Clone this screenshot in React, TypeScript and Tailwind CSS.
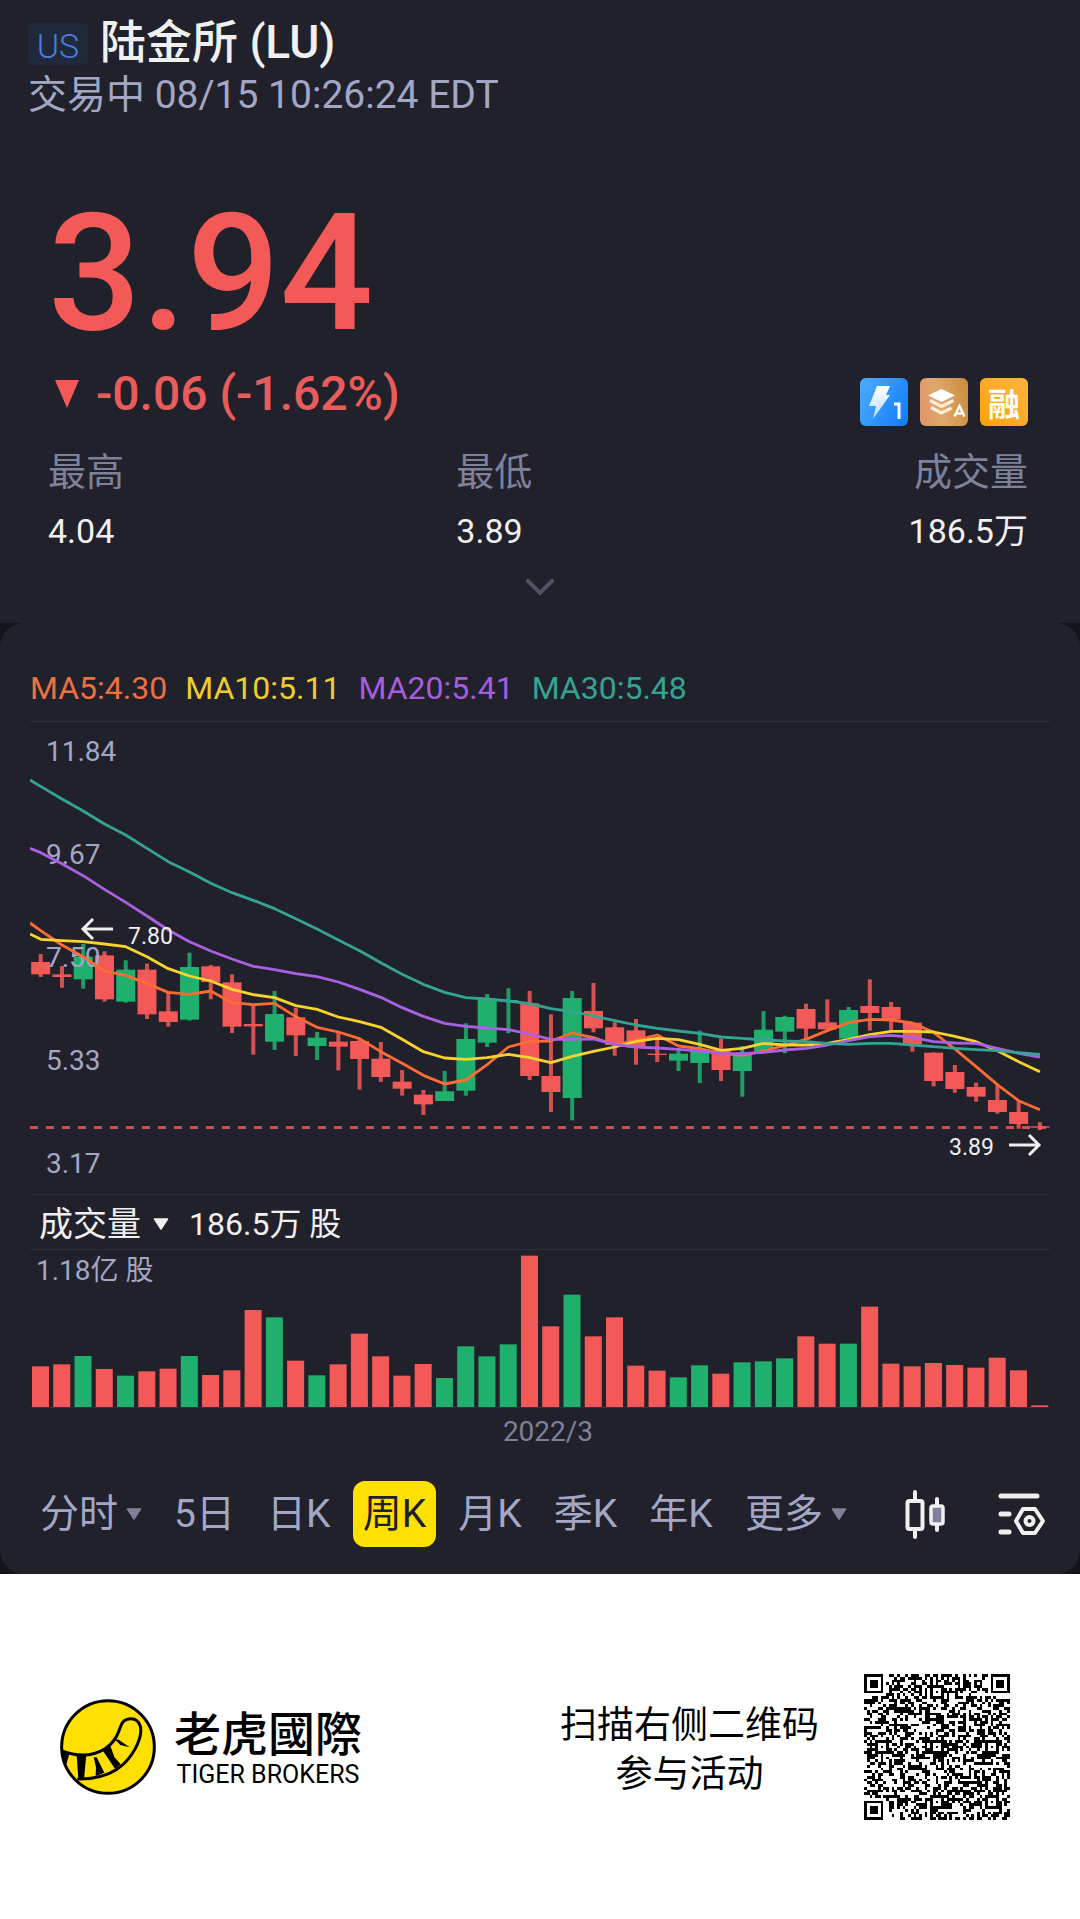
import { useState } from 'react';

type Candle = [high: number, top: number, bottom: number, low: number];

const UP = '#1fb06e';
const DOWN = '#f35956';
const STEP = 21.26;
const FIRST_CENTER = 10.7;

const risingWeeks = new Set([2, 4, 7, 11, 13, 19, 20, 21, 22, 25, 30, 31, 33, 34, 35, 38]);

// candle levels, three units per chart pixel
const candles: Candle[] = [
  [642, 666, 703, 711], [678, 703, 711, 743], [612, 650, 718, 746], [634, 646, 778, 785],
  [661, 689, 785, 788], [671, 689, 823, 837], [757, 814, 846, 860], [638, 681, 839, 842],
  [675, 679, 726, 778], [703, 727, 860, 879], [796, 852, 859, 944], [753, 822, 905, 930],
  [803, 832, 886, 948], [876, 893, 918, 960], [877, 905, 920, 991], [895, 903, 957, 1049],
  [906, 956, 1011, 1026], [990, 1025, 1046, 1067], [1050, 1064, 1093, 1125], [993, 1054, 1083, 1083],
  [850, 897, 1052, 1067], [762, 779, 908, 921], [745, 780, 784, 880], [753, 790, 1008, 1020],
  [823, 1008, 1056, 1116], [753, 774, 1074, 1141], [729, 813, 865, 877], [847, 862, 915, 947],
  [837, 871, 923, 974], [890, 941, 945, 966], [930, 941, 962, 993], [872, 932, 969, 1029],
  [896, 930, 990, 1023], [918, 940, 993, 1070], [813, 869, 933, 933], [827, 831, 875, 940],
  [791, 807, 866, 900], [778, 847, 868, 870], [801, 810, 896, 896], [718, 798, 819, 872],
  [786, 801, 838, 870], [848, 848, 912, 935], [937, 938, 1023, 1039], [975, 996, 1047, 1058],
  [1028, 1041, 1070, 1085], [1035, 1080, 1116, 1121], [1083, 1116, 1152, 1166], [1147, 1159, 1163, 1170]
];

// the first value of each average sits on the left edge of the plot
const averages = [
  {
    color: '#ff6b35',
    values: [549, 572, 615, 650, 693, 706, 731, 757, 763, 753, 788, 794, 790, 830, 862, 876, 896, 935, 970, 1006, 1032, 1020, 974, 921, 904, 903, 879, 893, 915, 900, 885, 918, 926, 940, 946, 933, 916, 898, 872, 848, 838, 840, 849, 877, 927, 980, 1034, 1082, 1109]
  },
  {
    color: '#f8d22f',
    values: [582, 598, 602, 605, 612, 620, 650, 686, 708, 723, 748, 764, 773, 797, 808, 831, 845, 862, 898, 935, 954, 958, 953, 943, 953, 968, 949, 934, 921, 904, 895, 899, 913, 931, 925, 910, 915, 915, 910, 898, 884, 874, 874, 876, 889, 905, 932, 965, 995]
  },
  {
    color: '#a960e3',
    values: [325, 338, 371, 407, 448, 487, 528, 570, 605, 633, 657, 679, 689, 701, 710, 726, 748, 772, 803, 829, 850, 859, 864, 869, 882, 898, 898, 897, 913, 921, 924, 928, 933, 940, 941, 937, 930, 925, 915, 902, 890, 886, 892, 905, 909, 910, 925, 940, 951]
  },
  {
    color: '#35a394',
    values: [120, 139, 177, 213, 252, 285, 325, 365, 396, 430, 458, 481, 506, 536, 567, 600, 632, 668, 703, 733, 757, 773, 777, 783, 791, 806, 815, 828, 842, 855, 865, 873, 880, 891, 895, 900, 903, 905, 910, 913, 910, 910, 915, 920, 925, 929, 932, 938, 943]
  }
];

const volumes = [
  122, 128, 153, 114, 94, 107, 115, 153, 96, 110, 291, 269, 139, 95, 128, 220, 152, 94, 129, 87, 182, 152, 188, 454,
  242, 337, 212, 269, 124, 109, 89, 125, 100, 134, 137, 146, 212, 190, 190, 301, 130, 122, 132, 126, 118, 148, 110, 5
];

const axisLabels = ['11.84', '9.67', '7.50', '5.33', '3.17'];

const periods = ['分时', '5日', '日K', '周K', '月K', '季K', '年K', '更多'];

const centerX = (index: number) => FIRST_CENTER + index * STEP;
const levelY = (value: number) => 18 + value / 3;
const barColor = (index: number) => (risingWeeks.has(index) ? UP : DOWN);

function Caret({ className }: { className: string }) {
  return (
    <svg viewBox="0 0 16 12" className={`h-3 w-4 ${className}`} aria-hidden="true">
      <path d="M1.5 1h13L8 11z" fill="currentColor" stroke="currentColor" strokeWidth="1.5" strokeLinejoin="round" />
    </svg>
  );
}

function QuoteBadges() {
  return (
    <div className="mt-2 flex gap-3">
      <svg viewBox="0 0 48 48" className="h-12 w-12" role="img" aria-label="Level 1">
        <defs>
          <linearGradient id="blue" x1="0" y1="0.2" x2="1" y2="0.7">
            <stop offset="0" stopColor="#4ba9fb" />
            <stop offset="1" stopColor="#1580fc" />
          </linearGradient>
          <linearGradient id="bolt" x1="0" y1="0" x2="0" y2="1">
            <stop offset="0" stopColor="#ffffff" />
            <stop offset="1" stopColor="#b9dcff" />
          </linearGradient>
        </defs>
        <rect width="48" height="48" rx="6" fill="url(#blue)" />
        <path d="M17 8h13l-4 9h4L13 41l3-13H9z" fill="url(#bolt)" />
        <path d="M34 26h5v15" fill="none" stroke="#fff" strokeWidth="3" />
      </svg>
      <svg viewBox="0 0 48 48" className="h-12 w-12" role="img" aria-label="A">
        <defs>
          <linearGradient id="bronze" x1="0" y1="0.6" x2="1" y2="0.4">
            <stop offset="0" stopColor="#e0976d" />
            <stop offset="0.4" stopColor="#dfa86b" />
            <stop offset="1" stopColor="#cc8e42" />
          </linearGradient>
        </defs>
        <rect width="48" height="48" rx="6" fill="url(#bronze)" />
        <path d="M21.500 11L35 17.500 21.500 24 8 17.500z" fill="#fff" />
        <path d="M10 22.500l11.500 6 12-6M11 29.500l10.500 5.500 10-5" fill="none" stroke="#ffeedb" strokeWidth="3.200" />
        <path d="M34.500 38.500L39.500 28l5 10.500M36 35.500h7" fill="none" stroke="#fff" strokeWidth="2.400" />
      </svg>
      <div className="flex h-12 w-12 items-center justify-center rounded-md bg-linear-to-bl from-[#fdb43a] to-[#fba200] font-['Noto_Sans_CJK_SC',sans-serif] text-[32px] leading-8 font-bold text-white">
        融
      </div>
    </div>
  );
}

function Stat({ label, value, className = '' }: { label: string; value: string; className?: string }) {
  return (
    <div className={className}>
      <dt className="text-[38px] leading-12 text-[#7e819b]">{label}</dt>
      <dd className="mt-[11px] text-[34px] leading-12 text-[#f0f0f0]">{value}</dd>
    </div>
  );
}

function QuoteHeader() {
  return (
    <header className="bg-[#21212b] pt-[19px] pb-[27px]">
      <div className="px-7">
        <div className="flex items-end gap-3">
          <span className="flex h-[42px] w-[60px] items-center justify-center rounded-md bg-[#20283c] pt-1 text-[34px] leading-8 font-light text-[#4b7ddd]">
            US
          </span>
          <h1 className="text-[46px] leading-[46px] font-medium text-[#f0f0f0]">陆金所 (LU)</h1>
        </div>
        <p className="mt-1.5 text-[39px] leading-12 text-[#a3a7c6]">交易中 08/15 10:26:24 EDT</p>
      </div>
      <div className="pr-[52px] pl-12">
        <p className="mt-[72px] text-[164px] leading-[164px] font-medium text-[#f35956]">3.94</p>
        <div className="mt-[15px] flex items-start justify-between">
          <p className="flex items-center gap-4 text-[48px] leading-12 font-medium text-[#e85d5b]">
            <svg viewBox="0 0 26 28" className="ml-1.5 h-7 w-[26px]" aria-hidden="true">
              <path d="M1 0h24L13 28z" fill="#f35956" />
            </svg>
            -0.06 (-1.62%)
          </p>
          <QuoteBadges />
        </div>
        <dl className="mt-[22px] grid grid-cols-12">
          <Stat label="最高" value="4.04" className="col-span-5" />
          <Stat label="最低" value="3.89" className="col-span-4" />
          <Stat label="成交量" value="186.5万" className="col-span-3 text-right" />
        </dl>
      </div>
      <button type="button" aria-label="展开" className="mx-auto mt-6 block">
        <svg viewBox="0 0 28 17" className="h-[17px] w-7" aria-hidden="true">
          <path d="M2 2l12 12L26 2" fill="none" stroke="#515364" strokeWidth="4" strokeLinecap="round" />
        </svg>
      </button>
    </header>
  );
}

function PriceChart() {
  return (
    <svg viewBox="0 0 1020 472" className="block w-full" role="img" aria-label="周K">
      {candles.map(([high, top, bottom, low], index) => (
        <g key={index} fill={barColor(index)}>
          <rect x={centerX(index) - 2} y={levelY(high)} width="4" height={(low - high) / 3} opacity="0.85" />
          <rect x={centerX(index) - 9.5} y={levelY(top)} width="19" height={(bottom - top) / 3} />
        </g>
      ))}
      <path d="M0 405.500H1020" stroke="#f35956" strokeWidth="3" strokeDasharray="8 8" opacity="0.85" />
      <g fill="#a3a7c6" className="text-[28px]">
        {axisLabels.map((label, index) => (
          <text key={label} x="16" y={39 + index * 103}>
            {label}
          </text>
        ))}
      </g>
      {averages.map(({ color, values }) => (
        <polyline
          key={color}
          points={values.map((value, i) => `${i === 0 ? 0 : centerX(i - 1)},${levelY(value)}`).join(' ')}
          fill="none"
          stroke={color}
          strokeWidth="2.800"
          strokeLinejoin="round"
        />
      ))}
      <g fill="none" stroke="#f0f0f0" strokeWidth="3">
        <path d="M83 207H53M63 197L53 207l10 10" />
        <path d="M979 423h30M999 413l10 10-10 10" />
      </g>
      <g fill="#f0f0f0" className="text-[23px]">
        <text x="98" y="222">7.80</text>
        <text x="919" y="433">3.89</text>
      </g>
    </svg>
  );
}

function VolumeChart() {
  return (
    <svg viewBox="0 0 1020 158" className="block w-full" role="img" aria-label="成交量">
      <path d="M0 157.500H1020" stroke="#2f303d" />
      {volumes.map((volume, index) => (
        <rect
          key={index}
          x={centerX(index) - 8.7}
          y={157 - volume / 3}
          width="17"
          height={volume / 3}
          fill={barColor(index)}
        />
      ))}
      <text x="6" y="30" fill="#a3a7c6" className="text-[28px]">
        1.18亿 股
      </text>
    </svg>
  );
}

function PeriodBar() {
  const [active, setActive] = useState('周K');

  return (
    <nav className="mt-[29px] flex items-center pr-1">
      <div className="flex flex-1 justify-between">
        {periods.map((period) => (
          <button
            type="button"
            key={period}
            onClick={() => setActive(period)}
            className={`flex h-[66px] items-center gap-2 rounded-xl px-[10px] text-[39px] leading-12 whitespace-nowrap ${
              active === period ? 'bg-[#ffe000] text-[#21212b]' : 'text-[#a3a7c6]'
            }`}
          >
            {period}
            {(period === '分时' || period === '更多') && <Caret className="text-[#7e819b]" />}
          </button>
        ))}
      </div>
      <button type="button" aria-label="K线样式" className="ml-12">
        <svg viewBox="0 0 40 50" className="h-[50px] w-10" fill="none" stroke="#f0f0f0" strokeLinecap="round">
          <path d="M10 3v9M10 40v8M32 10v7M32 34v7" strokeWidth="4" />
          <rect x="2.500" y="12" width="15" height="28" rx="2" strokeWidth="4" />
          <rect x="26" y="17" width="12" height="18" rx="2" fill="#7e819b" strokeWidth="3.500" />
        </svg>
      </button>
      <button type="button" aria-label="指标设置" className="ml-[53px]">
        <svg viewBox="0 0 48 44" className="h-11 w-12" fill="none" stroke="#f0f0f0" strokeLinecap="round">
          <path d="M3 4h36M3 22h8M3 40h8" strokeWidth="5" />
          <path d="M25 17h12l8 12-8 12H25l-7-12z" strokeWidth="4" strokeLinejoin="round" />
          <circle cx="31.500" cy="29" r="4" strokeWidth="4" />
        </svg>
      </button>
    </nav>
  );
}

function ChartPanel() {
  return (
    <main className="rounded-3xl bg-[#21212b] px-[30px] pt-[45px] pb-[27px]">
      <div className="flex gap-[18px] border-b border-[#2f303d] pb-[13px] text-[32px] leading-10 whitespace-nowrap">
        <span className="text-[#ec7040]">MA5:4.30</span>
        <span className="text-[#efcb2e]">MA10:5.11</span>
        <span className="text-[#a45edb]">MA20:5.41</span>
        <span className="text-[#35a394]">MA30:5.48</span>
      </div>
      <PriceChart />
      <div className="flex h-14 items-center gap-5 border-y border-[#2f303d] pt-1 pl-[9px] leading-10 text-[#f0f0f0]">
        <button type="button" className="flex items-center gap-3 text-[34px]">
          成交量
          <Caret className="text-[#f0f0f0]" />
        </button>
        <span className="text-[32px]">186.5万 股</span>
      </div>
      <VolumeChart />
      <p className="pt-1 pl-4 text-center text-[28px] leading-10 text-[#7e819b]">2022/3</p>
      <PeriodBar />
    </main>
  );
}

function TigerLogo() {
  return (
    <svg viewBox="0 0 288 288" className="h-24 w-24" role="img" aria-label="老虎國際">
      <circle cx="144" cy="144" r="139" fill="#ffe000" stroke="#000" strokeWidth="9" />
      <path
        d="M5 156C60 176 105 168 135 149C164 130 173 108 182 82C191 54 231 50 241 82C248 112 226 160 192 194C155 229 108 241 52 240"
        fill="none"
        stroke="#000"
        strokeWidth="9"
      />
      <path d="M4 154L28 164L19 196L8 186zM50 167L79 167L72 240L55 240zM101 175L110 175L133 221L107 231L108 205zM127 153L151 140L163 174L182 196L165 209zM164 120L176 122L209 145L181 138z" />
    </svg>
  );
}

const QR_SIZE = 53;

const inFinder = (x: number, y: number) =>
  (x < 8 && y < 8) || (x >= QR_SIZE - 8 && y < 8) || (x < 8 && y >= QR_SIZE - 8);

function qrPath(): string {
  let seed = 20220815;
  let d = '';
  for (let y = 0; y < QR_SIZE; y += 1) {
    for (let x = 0; x < QR_SIZE; x += 1) {
      seed = (seed * 1103515245 + 12345) % 2147483648;
      if (!inFinder(x, y) && seed / 2147483648 < 0.5) d += `M${x} ${y}h1v1h-1z`;
    }
  }
  return d;
}

function QrCode() {
  const far = QR_SIZE - 7;
  const finders = [[0, 0], [far, 0], [0, far]];
  const markers = [[24, 4], [4, 24], [24, 24], [44, 24], [24, 44], [44, 44]];

  return (
    <svg viewBox="0 0 53 53" className="size-[146px] shrink-0" shapeRendering="crispEdges" role="img" aria-label="二维码">
      <path d={qrPath()} />
      {finders.map(([x, y]) => (
        <g key={`finder-${x}-${y}`}>
          <rect x={x + 0.5} y={y + 0.5} width="6" height="6" fill="#fff" stroke="#000" />
          <rect x={x + 2} y={y + 2} width="3" height="3" />
        </g>
      ))}
      {markers.map(([x, y]) => (
        <g key={`marker-${x}-${y}`}>
          <rect x={x + 0.5} y={y + 0.5} width="4" height="4" fill="#fff" stroke="#000" />
          <rect x={x + 2} y={y + 2} width="1" height="1" />
        </g>
      ))}
    </svg>
  );
}

function BrandFooter() {
  return (
    <footer className="flex flex-1 items-center justify-between bg-white py-24 pr-[70px] pl-[60px] font-['Noto_Sans_CJK_SC',sans-serif] text-black">
      <div className="flex items-center gap-[18px]">
        <TigerLogo />
        <div className="pt-[5px] text-center">
          <p className="text-[47px] leading-12 font-medium">老虎國際</p>
          <p className="mt-1 font-['Roboto',sans-serif] text-[25px] leading-8">TIGER BROKERS</p>
        </div>
      </div>
      <div className="flex items-center gap-[45px]">
        <p className="text-center text-[37px] leading-[49px]">
          扫描右侧二维码
          <br />
          参与活动
        </p>
        <QrCode />
      </div>
    </footer>
  );
}

export default function App() {
  return (
    <div className="flex min-h-screen flex-col bg-white font-['Roboto','Noto_Sans_CJK_SC',sans-serif]">
      <div className="bg-[#14141d]">
        <QuoteHeader />
        <ChartPanel />
      </div>
      <BrandFooter />
    </div>
  );
}
